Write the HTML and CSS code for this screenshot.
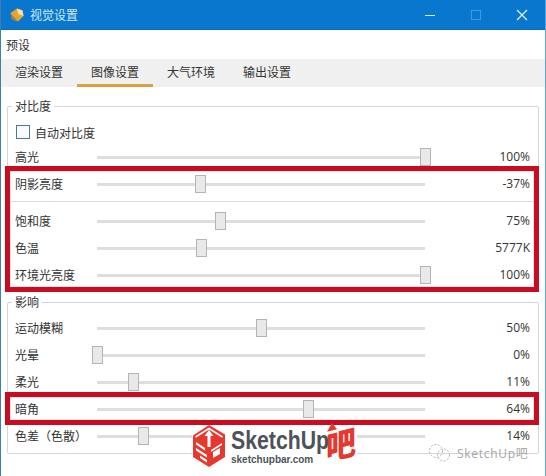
FILE: index.html
```html
<!DOCTYPE html>
<html lang="zh-CN">
<head>
    <meta charset="UTF-8">
    <title>视觉设置</title>
    <link rel="stylesheet" href="styles.css">
</head>
<body>
    <div class="window">
        <div class="titlebar">
            <svg class="app-icon" width="16" height="16" viewBox="0 0 16 16">
                <path d="M8 1.500 13.500 3.500 14.500 9 9 14.500 3 12.500 1.500 6Z" fill="#e9a42c"/>
                <path d="M8 1.500 13.500 3.500 14.500 9 9 7Z" fill="#f8e2a4"/>
                <path d="M1.500 6 4 9 9 14.500 3 12.500Z" fill="#8f8069"/>
            </svg>
            <span class="title">视觉设置</span>
            <div class="controls">
                <svg width="12" height="12" viewBox="0 0 12 12"><path d="M1 6.500H11" stroke="#d5ecfa" stroke-width="1"/></svg>
                <svg width="12" height="12" viewBox="0 0 12 12"><rect x="1.500" y="1.500" width="9" height="9" fill="none" stroke="#3f9ae0"/></svg>
                <svg width="12" height="12" viewBox="0 0 12 12"><path d="M1 1 11 11M11 1 1 11" stroke="#e6f4fc" stroke-width="1.200"/></svg>
            </div>
        </div>

        <div class="menu">预设</div>

        <div class="tabs">
            <div class="tab">渲染设置</div>
            <div class="tab active">图像设置</div>
            <div class="tab">大气环境</div>
            <div class="tab">输出设置</div>
        </div>

        <fieldset class="group group-contrast">
            <legend>对比度</legend>
            <label class="check-row"><input type="checkbox">自动对比度</label>
            <div class="row">
                <span>高光</span>
                <div class="track"><span class="thumb" style="left: 100%"></span></div>
                <span class="value">100%</span>
            </div>
            <div class="mark mark-big">
                <div class="row">
                    <span>阴影亮度</span>
                    <div class="track"><span class="thumb" style="left: 31.5%"></span></div>
                    <span class="value">-37%</span>
                </div>
                <div class="sep"></div>
                <div class="row">
                    <span>饱和度</span>
                    <div class="track"><span class="thumb" style="left: 37.5%"></span></div>
                    <span class="value">75%</span>
                </div>
                <div class="row">
                    <span>色温</span>
                    <div class="track"><span class="thumb" style="left: 31.8%"></span></div>
                    <span class="value">5777K</span>
                </div>
                <div class="row">
                    <span>环境光亮度</span>
                    <div class="track"><span class="thumb" style="left: 100%"></span></div>
                    <span class="value">100%</span>
                </div>
            </div>
        </fieldset>

        <fieldset class="group group-effects">
            <legend>影响</legend>
            <div class="row">
                <span>运动模糊</span>
                <div class="track"><span class="thumb" style="left: 50%"></span></div>
                <span class="value">50%</span>
            </div>
            <div class="row">
                <span>光晕</span>
                <div class="track"><span class="thumb" style="left: 0%"></span></div>
                <span class="value">0%</span>
            </div>
            <div class="row">
                <span>柔光</span>
                <div class="track"><span class="thumb" style="left: 11%"></span></div>
                <span class="value">11%</span>
            </div>
            <div class="mark mark-small">
                <div class="row">
                    <span>暗角</span>
                    <div class="track"><span class="thumb" style="left: 64.2%"></span></div>
                    <span class="value">64%</span>
                </div>
            </div>
            <div class="row">
                <span>色差（色散）</span>
                <div class="track"><span class="thumb" style="left: 14%"></span></div>
                <span class="value">14%</span>
            </div>
        </fieldset>

        <!-- watermarks on top of the screenshot -->
        <div class="logo">
            <svg class="logo-mark" width="34" height="43" viewBox="0 0 34 43">
                <path d="M17 0 33 9.500 33 32 17 42 1 32 1 10.500Z" fill="#e5392f"/>
                <path d="M3.500 12 17 3.500 30.500 12" fill="none" stroke="#fff" stroke-width="1.500"/>
                <path d="M17 5 12.500 11 15.500 11 15.500 22 18.500 22 18.500 11 21.500 11Z" fill="#fff"/>
                <path d="M4 17 13 23 13 25.500 4 19.500ZM4 23 15 30 15 32.500 4 25.500ZM8 30.500 15 35 15 37.500 8 33Z" fill="#fff"/>
                <path d="M21 27 28 23 28 29 21 33Z" fill="#fff"/>
                <path d="M19 25 30 18 30 20 19 27Z" fill="#fff"/>
            </svg>
            <div class="logo-text">
                <div class="logo-name">SketchUp</div>
                <div class="logo-url">sketchupbar.com</div>
            </div>
            <div class="logo-char">吧</div>
        </div>

        <div class="wechat">
            <svg width="23" height="18" viewBox="0 0 23 18" fill="none" stroke="#b5b5b5" stroke-width="1" stroke-dasharray="2 1.500">
                <circle cx="8" cy="7" r="6.500"/>
                <circle cx="15.500" cy="11" r="6"/>
            </svg>
            <span>SketchUp吧</span>
        </div>
    </div>
</body>
</html>
```

FILE: styles.css
```css
* {
    box-sizing: border-box;
}

html, body {
    margin: 0;
    height: 100%;
}

body {
    font-family: "Noto Sans CJK SC", "Open Sans", sans-serif;
    font-size: 12px;
    color: #333;
    background: white;
    overflow: hidden;
}

.window {
    position: relative;
    height: 476px;
    border-left: 1px solid #3f7fa8;
    border-right: 1px solid #5aa5dc;
    overflow: hidden;
}

.titlebar {
    display: flex;
    align-items: center;
    height: 30px;
    margin: 0 -1px;
    padding-left: 9px;
    background: #0a77cf;
    border-bottom: 1px solid #1169ad;
}

.app-icon {
    margin-right: 5px;
}

.title {
    color: #cfe8f8;
    line-height: 16px;
}

.controls {
    display: flex;
    gap: 34px;
    margin-left: auto;
    margin-right: 18px;
}

.menu {
    height: 29px;
    padding-left: 5px;
    line-height: 30px;
}

.tabs {
    display: flex;
    height: 28px;
    background: #f0f0f0;
}

.tab {
    padding: 0 14px;
    line-height: 26px;
}

.tab.active {
    border-bottom: 3px solid #d9a13f;
}

.group {
    margin: 11px 6px 0;
    padding: 0;
    min-width: 0;
    border: 1px solid #d6d6d6;
    border-radius: 2px;
}

.group legend {
    margin-left: 4px;
    padding: 0 3px;
    line-height: 16px;
}

.group-contrast {
    height: 192px;
    padding-top: 9px;
}

.group-effects {
    margin-top: 4px;
    padding-top: 9px;
    padding-bottom: 8px;
}

.check-row {
    display: flex;
    align-items: center;
    height: 18px;
    margin-bottom: 7px;
    padding-left: 8px;
}

.check-row input {
    appearance: none;
    width: 14px;
    height: 14px;
    margin: 0 5px 0 0;
    background: #f7fbfd;
    border: 1px solid #4f7890;
}

.row {
    display: grid;
    grid-template-columns: 82px 328px 1fr;
    align-items: center;
    height: 18px;
    padding: 0 8px 0 7px;
    line-height: 18px;
}

.row + .row {
    margin-top: 9px;
}

.track {
    position: relative;
    height: 3px;
    background: #dedede;
}

.thumb {
    position: absolute;
    top: -8px;
    width: 11px;
    height: 18px;
    margin-left: -5px;
    background: #e9e9e9;
    border: 1px solid #b4b4b4;
}

.value {
    font-family: "Open Sans", sans-serif;
    text-align: right;
}

.sep {
    height: 1px;
    margin: 8px 0 10px;
    background: #dcdcdc;
}

.mark {
    position: relative;
    border: 5px solid #c70d22;
    box-shadow: inset 0 0 0 1px #fbe3e5;
}

.mark .row {
    padding: 0 4px 0 5px;
}

.mark-big {
    margin: 0 -1px 0 -3px;
    padding: 4px 0 3px;
}

.mark-small {
    margin: 1px -1px 2px -3px;
    padding: 3px 0 2px;
}

.logo {
    position: absolute;
    left: 191px;
    top: 425px;
    display: flex;
    width: 165px;
    height: 43px;
    background: white;
}

.logo-mark {
    flex: none;
}

.logo-text {
    width: 98px;
    margin-left: 5px;
    font-family: "Liberation Sans", sans-serif;
    font-weight: bold;
    color: #4d5359;
}

.logo-name {
    width: 115px;
    height: 29px;
    padding-top: 2px;
    font-size: 25px;
    line-height: 27px;
    transform: scaleX(0.85);
    transform-origin: left;
}

.logo-url {
    font-size: 10px;
    line-height: 11px;
}

.logo-char {
    position: relative;
    margin-left: -3px;
    font-size: 30px;
    font-weight: 900;
    line-height: 36px;
    color: #e5392f;
    transform: skewY(-14deg) scaleY(1.1);
}

/* little arrow on the left stroke of the red character */
.logo-char::before {
    content: "";
    position: absolute;
    left: 1px;
    top: -2px;
    border-left: 5px solid transparent;
    border-right: 5px solid transparent;
    border-bottom: 7px solid #e5392f;
}

.wechat {
    position: absolute;
    left: 427px;
    top: 444px;
    display: flex;
    align-items: center;
    gap: 6px;
    font-family: "Open Sans", "Noto Sans CJK SC", sans-serif;
    font-size: 12px;
    letter-spacing: 0.7px;
    color: #a6a6a6;
}
```
